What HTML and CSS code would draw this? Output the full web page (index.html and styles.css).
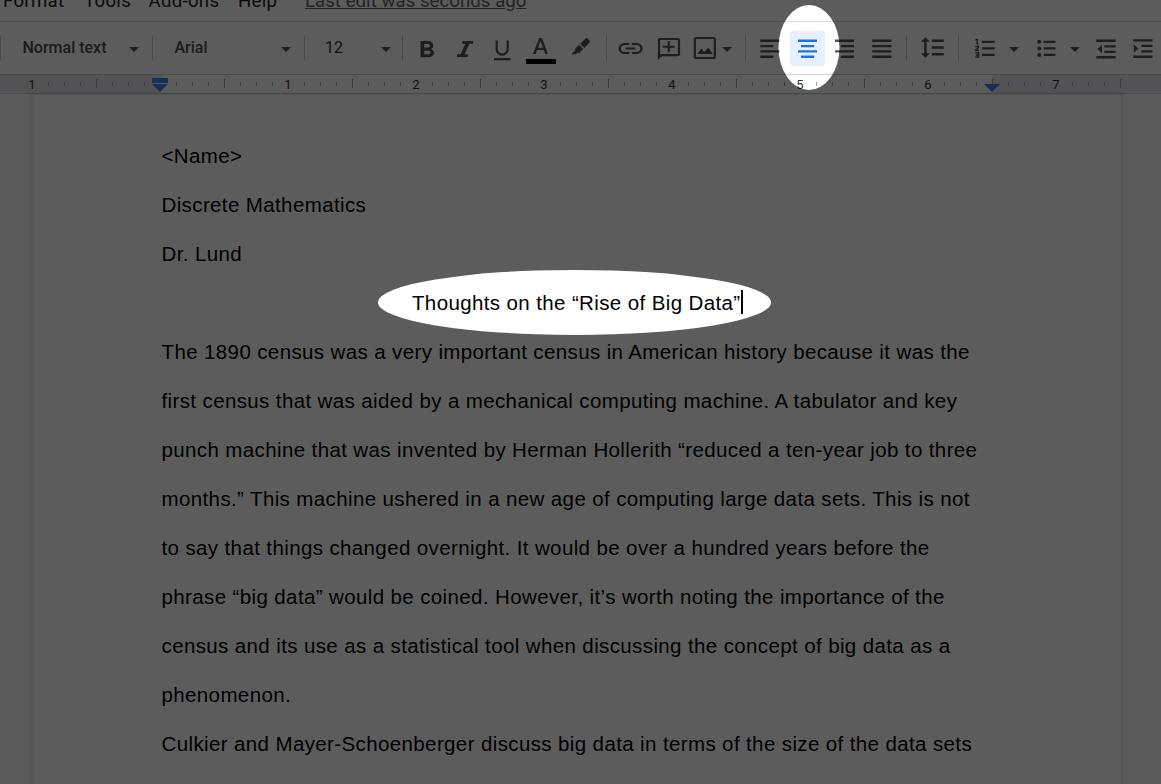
FILE: index.html
```html
<!DOCTYPE html>
<html lang="en">
<head>
<meta charset="utf-8">
<title>Document editor</title>
<link rel="stylesheet" href="styles.css">
</head>
<body>
<div class="app">
  <nav class="menu">
    <span class="menu-format">Format</span>
    <span class="menu-tools">Tools</span>
    <span class="menu-addons">Add-ons</span>
    <span class="menu-help">Help</span>
    <span class="last-edit">Last edit was seconds ago</span>
  </nav>
  <div class="toolbar">
    <div class="group group-style"><span class="label">Normal text</span><i class="caret"></i></div>
    <div class="group group-font"><span class="label">Arial</span><i class="caret"></i></div>
    <div class="group group-size"><span class="label">12</span><i class="caret"></i></div>
    <div class="group group-format">
      <svg class="icon" viewBox="415 34 24 32"><path transform="translate(411.75 36.36) scale(1.25 1.16)" d="M15.6 10.79c.97-.67 1.65-1.77 1.65-2.79 0-2.26-1.75-4-4-4H7v14h7.04c2.09 0 3.71-1.7 3.71-3.79 0-1.52-.86-2.82-2.15-3.42zM10 6.5h3c.83 0 1.5.67 1.5 1.5s-.67 1.5-1.5 1.5h-3v-3zm3.5 9H10v-3h3.500c.83 0 1.500.67 1.500 1.500s-.67 1.500-1.500 1.500z"/></svg>
      <svg class="icon m13" viewBox="452 34 24 32"><path transform="translate(449 36.4) scale(1.33 1.15)" d="M10 4v2.400h2.300l-3.600 9.200H6V18h8v-2.400h-2.300l3.600-9.200H18V4z"/></svg>
      <svg class="icon m14" viewBox="490 34 24 32"><path class="line" d="M496.700 40.500v8.700a5.500 5.500 0 0 0 11 0v-8.700"/><path d="M494 58h16.500v2.300H494z"/></svg>
      <svg class="icon icon-wide m12" viewBox="526 34 30 32"><path d="M539.200 38h2.700l6 16h-2.600l-1.400-4h-6.800l-1.400 4H533zm-1.200 9.800h5l-2.500-7z"/><path class="ink" d="M526 59h30v5h-30z"/></svg>
      <svg class="icon m12" viewBox="568 34 24 32"><path d="M580.200 43.700l5.300-5.200q1-.8 2 0l2 2q.8 1 0 2l-5.200 5.400zM579.100 44.800l4.200 4.200-3.700 3.800q-1 .7-2.200 0l-1.500 1.500h-4.700l4.100-4.100q-.6-1 .1-1.800z"/></svg>
    </div>
    <div class="group group-insert">
      <svg class="icon" viewBox="618 34 26 32"><path transform="translate(616.200 35.300) scale(1.2 1.1)" d="M3.900 12c0-1.710 1.390-3.100 3.100-3.100h4V7H7c-2.760 0-5 2.240-5 5s2.240 5 5 5h4v-1.900H7c-1.710 0-3.100-1.390-3.100-3.100zM8 13h8v-2H8v2zm9-6h-4v1.900h4c1.710 0 3.100 1.390 3.100 3.100s-1.390 3.100-3.100 3.100h-4V17h4c2.760 0 5-2.240 5-5s-2.240-5-5-5z"/></svg>
      <svg class="icon m13" viewBox="657 34 24 32"><path class="line" d="M659 56.500V40q0-1 1-1h18q1 0 1 1v14.200q0 1-1 1h-16z"/><path d="M657.900 54v6l4.800-4.800zM667.700 41h2.100v4.700h4.800v2h-4.800v4.600h-2.100v-4.600h-4.800v-2h4.800z"/></svg>
      <svg class="icon m12" viewBox="693 34 24 32"><rect class="line" x="694.800" y="38" width="20" height="20" rx="1.500"/><path d="M697.300 54l4-5.500 3 3.500 4.200-4.500 4.200 6.500z"/></svg>
      <i class="caret m5"></i>
    </div>
    <div class="group group-align">
      <svg class="icon" viewBox="757 34 24 32"><path d="M760.300 39.500h19V42h-19zM760.300 45h13.200v2.300h-13.200zM760.300 50.200h19v2.300h-19zM760.300 55.600h13.200V58h-13.200z"/></svg>
      <span class="active"><svg class="icon" viewBox="796 34 24 32"><path d="M798 39.500h19V42h-19zM801 45h13.200v2.300H801zM798 50.200h19v2.300h-19zM801 55.600h13.200V58H801z"/></svg></span>
      <svg class="icon m7" viewBox="832 34 24 32"><path d="M835 39.500h19V42h-19zM840.800 45H854v2.300h-13.200zM835 50.200h19v2.300h-19zM840.800 55.600H854V58h-13.200z"/></svg>
      <svg class="icon m13" viewBox="869 34 24 32"><path d="M872.200 39.500h19.200V42h-19.200zM872.200 45h19.200v2.300h-19.200zM872.200 50.200h19.200v2.300h-19.200zM872.200 55.600h19.200V58h-19.200z"/></svg>
    </div>
    <div class="group group-spacing">
      <svg class="icon" viewBox="920 34 26 32"><path d="M925.400 37.300l4.500 4.400h-3.300v11.600h3.300l-4.500 4.400-4.500-4.400h3.300V41.700h-3.300zM931.800 39.600h12V42h-12zM931.800 46.300h12v2.400h-12zM931.800 53h12v2.400h-12z"/></svg>
    </div>
    <div class="group group-lists">
      <svg class="icon" viewBox="973 34 24 32"><path d="M982 40.700h12.700V43H982zM982 47.200h12.700v2.300H982zM982 53.800h12.700V56H982z"/><path class="digit" d="M975.500 39.800h1.700v5M975.300 46.500h3.200v.9l-2.700 2.900h3.200M975.300 52.700h3.200v4.300h-3.200M976 54.900h2.500"/></svg>
      <i class="caret m12"></i>
      <svg class="icon m15" viewBox="1034 34 24 32"><circle cx="1039.200" cy="41.800" r="2"/><circle cx="1039.200" cy="48.400" r="2"/><circle cx="1039.200" cy="55" r="2"/><path d="M1043.700 40.700h11.800V43h-11.800zM1043.700 47.200h11.800v2.300h-11.800zM1043.700 53.800h11.800V56h-11.800z"/></svg>
      <i class="caret m12"></i>
      <svg class="icon m14" viewBox="1094 34 24 32"><path d="M1096.300 39.500h19.400v2.400h-19.400zM1104.300 45.200h11.400v2.200h-11.400zM1104.300 50.700h11.400v2.200h-11.400zM1096.300 56h19.400v2.400h-19.400zM1102 45v8.200l-4.600-4.100z"/></svg>
      <svg class="icon m13" viewBox="1131 34 24 32"><path d="M1133.200 39.200h19.300v2.400h-19.300zM1141.300 44.800h11.200V47h-11.200zM1141.300 50.300h11.200v2.200h-11.200zM1133.200 55.600h19.300V58h-19.300zM1133.800 44.500v8.200l4.600-4.100z"/></svg>
    </div>
  </div>
  <svg class="ruler" viewBox="0 74 1161 21">
    <defs>
      <pattern id="ticks" x="32" y="74" width="128" height="20" patternUnits="userSpaceOnUse">
        <path class="tick" d="M16.500 8v4M32.500 8v4M48.500 8v4M64.500 5v9M80.500 8v4M96.500 8v4M112.500 8v4"/>
      </pattern>
    </defs>
    <rect class="ruler-margin" x="0" y="74" width="1161" height="20"/>
    <rect class="ruler-body" x="161" y="75" width="831" height="18"/>
    <rect x="32" y="74" width="1090" height="20" fill="url(#ticks)"/>
    <path class="ruler-edge" d="M0 74.500h1161M0 93.500h1161"/>
    <path class="tick" d="M992.500 79v9M1120.500 79v9"/>
    <g class="ruler-text">
      <text x="32" y="89">1</text><text x="288" y="89">1</text><text x="416" y="89">2</text><text x="544" y="89">3</text><text x="672" y="89">4</text><text x="800" y="89">5</text><text x="928" y="89">6</text><text x="1056" y="89">7</text>
    </g>
    <path class="marker" d="M152 78h16v5h-16zM152 84h16l-8 8zM984 84h16l-8 8z"/>
  </svg>
  <main class="canvas">
    <article class="page">
      <p>&lt;Name&gt;</p>
      <p>Discrete Mathematics</p>
      <p>Dr. Lund</p>
      <p class="title">Thoughts on the “Rise of Big Data”<i class="cursor"></i></p>
      <p>The 1890 census was a very important census in American history because it was the<br>first census that was aided by a mechanical computing machine. A tabulator and key<br>punch machine that was invented by Herman Hollerith “reduced a ten-year job to three<br>months.” This machine ushered in a new age of computing large data sets. This is not<br>to say that things changed overnight. It would be over a hundred years before the<br>phrase “big data” would be coined. However, it’s worth noting the importance of the<br>census and its use as a statistical tool when discussing the concept of big data as a<br>phenomenon.</p>
      <p>Culkier and Mayer-Schoenberger discuss big data in terms of the size of the data sets</p>
    </article>
  </main>
</div>
<svg class="spotlight" viewBox="0 0 1161 784"><path fill-rule="evenodd" d="M0 0h1161v784H0zM778.500 47.500a30.500 42.500 0 0 0 61 0a30.500 42.500 0 0 0-61 0zM378 302.400a196.500 32.500 0 0 0 393 0a196.500 32.500 0 0 0-393 0z"/></svg>
</body>
</html>
```
FILE: styles.css
```css
* { box-sizing: border-box; }
body { margin: 0; background: #fff; }
.app { width: 1161px; height: 784px; overflow: hidden; display: flex; flex-direction: column; }

.menu { height: 22px; flex: none; display: flex; align-items: flex-end; border-bottom: 1px solid #dadce0; font: 18.6px/22px Roboto, sans-serif; color: #202124; padding: 0 0 9px 3px; white-space: nowrap; letter-spacing: .3px; }
.menu-format { width: 81px; }
.menu-tools { width: 64.500px; }
.menu-addons { width: 89.500px; }
.menu-help { width: 67px; }
.last-edit { color: #5f6368; text-decoration: underline; letter-spacing: .05px; }

.toolbar { height: 52px; flex: none; display: flex; align-items: center; }
.group { height: 26px; flex: none; display: flex; align-items: center; border-left: 1px solid #cfd1d5; }
.label { font: 500 16px/22px Roboto, sans-serif; color: #4b4e52; }
.group-style { width: 152px; padding-left: 21.500px; }
.group-style .label { width: 106.500px; }
.group-font { width: 152px; padding-left: 21.500px; }
.group-font .label { width: 106.500px; }
.group-size { width: 98px; padding-left: 20px; }
.group-size .label { width: 56px; font-weight: 400; color: #333538; }
.group-format { width: 204px; padding-left: 12px; }
.group-insert { width: 139px; padding-left: 11px; }
.group-align { width: 161px; padding-left: 11px; }
.group-spacing { width: 52px; padding-left: 13px; }
.group-lists { width: 203px; padding-left: 14px; }
.icon { flex: none; width: 24px; height: 32px; margin-top: 4px; fill: #505357; display: block; }
.icon[viewBox$="26 32"] { width: 26px; }
.icon-wide { width: 30px; }
.line { fill: none; stroke: #505357; stroke-width: 2.2; }
.digit { fill: none; stroke: #505357; stroke-width: 1.500; }
.ink { fill: #000; }
.active { flex: none; width: 35px; height: 35px; margin-left: 9px; border-radius: 3px; background: #e8f0fe; display: flex; align-items: center; justify-content: center; }
.active .icon { fill: #1a73e8; }
.caret { flex: none; width: 10px; height: 5px; margin-top: 3px; background: #505357; clip-path: polygon(0 0, 100% 0, 50% 100%); }
.m5 { margin-left: 5px; }
.m7 { margin-left: 7px; }
.m12 { margin-left: 12px; }
.m13 { margin-left: 13px; }
.m14 { margin-left: 14px; }
.m15 { margin-left: 15px; }

.ruler { width: 1161px; height: 21px; flex: none; display: block; background: #f8f9fa; }
.ruler-margin { fill: #e6e6eb; }
.ruler-body { fill: #fff; }
.ruler-edge { stroke: #cfd1d5; fill: none; }
.tick { stroke: #a5a5a8; fill: none; }
.ruler-text { font: 13px Roboto, sans-serif; fill: #333; text-anchor: middle; }
.marker { fill: #4285f4; }

.canvas { flex: 1; min-height: 0; background: #f8faf9; padding-left: 33px; }
.page { width: 1088px; height: 700px; background: #fff; box-shadow: 0 0 3px 1px rgba(60, 64, 67, .15); padding: 36px 128px 0 128.500px; font: 20.500px/49.020px "Liberation Sans", Arial, sans-serif; letter-spacing: .38px; color: #000; white-space: nowrap; }
.page p { margin: 0; }
.page .title { text-align: center; padding-right: 2px; }
.cursor { display: inline-block; width: 2px; height: 24px; background: #000; vertical-align: -4px; margin-right: -2px; }

.spotlight { position: absolute; inset: 0; width: 1161px; height: 784px; fill: rgba(0, 0, 0, .64); }
```
